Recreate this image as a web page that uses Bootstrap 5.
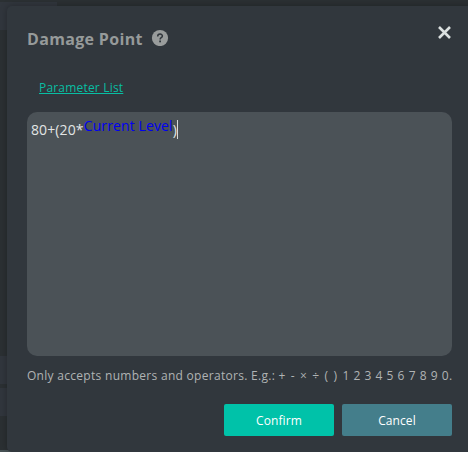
<!DOCTYPE html>
<html lang="en">
<head>
<meta charset="utf-8">
<meta name="viewport" content="width=device-width, initial-scale=1">
<title>Damage Point</title>
<link href="https://cdn.jsdelivr.net/npm/bootstrap@5.3.0/dist/css/bootstrap.min.css" rel="stylesheet">
<style>
body{width:468px;height:452px;background:#2b3033;font-family:"Open Sans","Noto Sans",sans-serif;font-size:12px}
.backdrop-panel{left:0;background:#31363d}
.panel-a{top:2px;width:57px;height:28px}
.panel-b{top:356px;width:30px;height:28px}
.panel-c{top:388px;width:30px;height:28px}
.panel-d{top:450px;width:468px;height:2px;background:#485255}
.dialog-box{width:465px;height:446px;margin:6px 0 0 7px;padding:0 20px;background:#31373d;border-radius:5px;box-shadow:0 0 7px rgba(0,0,0,.28)}
.dialog-head{height:66px}
.dialog-title{font:700 16px/24px "Open Sans","Noto Sans",sans-serif;color:#969a9a;letter-spacing:.33px}
.close-icon{margin-top:-13px}
.param-link{font-size:12px;line-height:18px;color:#08bea3;margin-left:12px;margin-top:7px;letter-spacing:.19px}
.param-link:hover{color:#08bea3}
.formula{height:244px;margin-top:15px;border-radius:10px;background:#4b5257;color:#e2e5e5;padding:7px 4px;font-size:14px;line-height:21px;letter-spacing:.12px}
.formula-token{color:#0000f0;margin-top:-4px}
.caret{width:1px;height:19px;background:#d7dada;margin-top:1px}
.hint{height:18px;line-height:18px;margin-top:11px;color:#b0b3b4;letter-spacing:.29px}
.hint-digits{word-spacing:.47px}
.hint-signs{word-spacing:1.7px}
.dialog-btn{width:110px;height:32px;padding:2px 0 0;border:0;border-radius:2px;font-size:12px;color:#fff;letter-spacing:.1px}
.btn-ok{background:#00c2a9}
.btn-no{background:#447e8b}
.btn-row{margin-top:19px}
</style>
</head>
<body class="position-relative overflow-hidden">
<div class="backdrop-panel panel-a position-absolute"></div>
<div class="backdrop-panel panel-b position-absolute"></div>
<div class="backdrop-panel panel-c position-absolute"></div>
<div class="backdrop-panel panel-d position-absolute"></div>
<main class="dialog-box position-relative d-flex flex-column">
  <header class="dialog-head d-flex align-items-center justify-content-between">
    <div class="d-flex align-items-center gap-2">
      <h1 class="dialog-title m-0 text-nowrap">Damage Point</h1>
      <svg class="mb-1" width="18" height="18" viewBox="0 0 18 18" aria-hidden="true"><circle cx="9" cy="10" r="8.1" fill="#999c9c"/><path d="M6.7 8.4c0-3 4.7-3 4.7-.4 0 1.7-2.3 1.7-2.3 3.4" fill="none" stroke="#31373d" stroke-width="1.5"/><rect x="8.2" y="12.5" width="1.8" height="1.8" fill="#31373d"/></svg>
    </div>
    <svg class="close-icon" width="15" height="15" viewBox="0 0 15 15" aria-label="Close"><path d="M2 2l11 11M13 2L2 13" stroke="#dbe0e0" stroke-width="2.6"/></svg>
  </header>
  <a class="param-link align-self-start text-nowrap" href="#">Parameter List</a>
  <div class="formula d-flex align-items-start text-nowrap"><span>80+(20*</span><span class="formula-token">Current Level</span><span>)</span><span class="caret"></span></div>
  <div class="hint text-nowrap">Only accepts numbers and operators. E.g.: <span class="hint-signs">+ - × ÷ ( ) </span><span class="hint-digits">1 2 3 4 5 6 7 8 9 0.</span></div>
  <div class="btn-row d-flex justify-content-end gap-2">
    <button class="btn dialog-btn btn-ok" type="button">Confirm</button>
    <button class="btn dialog-btn btn-no" type="button">Cancel</button>
  </div>
</main>
<script src="https://cdn.jsdelivr.net/npm/bootstrap@5.3.0/dist/js/bootstrap.bundle.min.js"></script>
</body>
</html>
